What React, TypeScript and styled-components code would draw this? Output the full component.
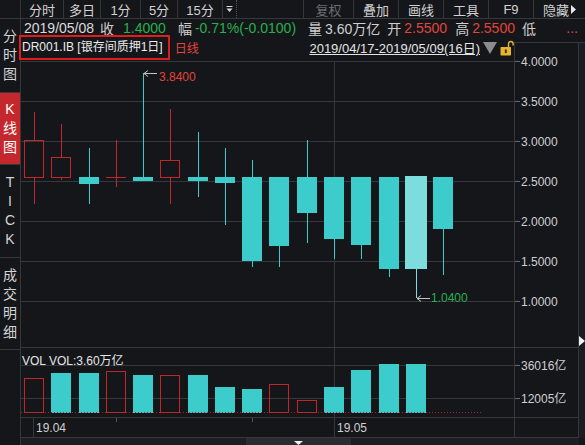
import React from "react";
import styled, { createGlobalStyle } from "styled-components";

const FONT = `"Liberation Sans", "Noto Sans CJK SC", sans-serif`;
const BG = "#15161a";
const LINE = "#36373d";
const TEXT = "#cfcfcf";
const RED_TXT = "#e2443c";
const RED = "#c0262a";
const GREEN = "#28b04c";
const CYAN = "#3ccccc";
const CYAN_SEL = "#7ddcdc";

const GlobalStyle = createGlobalStyle`
  html, body { margin: 0; padding: 0; background: ${BG}; }
  body { font-family: ${FONT}; color: ${TEXT}; }
  #root { width: 585px; height: 445px; overflow: hidden; }
`;

const Frame = styled.div`
  display: flex;
  width: 585px;
  height: 445px;
  background: ${BG};
  overflow: hidden;
`;

/* ---------- sidebar ---------- */
const Sidebar = styled.div`
  width: 20px;
  flex-shrink: 0;
  border-right: 1px solid ${LINE};
  display: flex;
  flex-direction: column;
`;
const SideCorner = styled.div`
  height: 19px;
  box-sizing: border-box;
  border-bottom: 1px solid ${LINE};
`;
const SideTab = styled.div<{ $h: number; $active?: boolean }>`
  height: ${(p) => p.$h}px;
  box-sizing: border-box;
  border-bottom: 1px solid ${LINE};
  display: flex;
  flex-direction: column;
  align-items: center;
  justify-content: center;
  background: ${(p) => (p.$active ? "#c4282c" : "transparent")};
  color: ${(p) => (p.$active ? "#ffffff" : "#d4d4d4")};
  font-size: 14px;
  line-height: 19px;
`;
const SideChar = styled.span`
  display: block;
  height: 19px;
`;

/* ---------- main ---------- */
const Main = styled.div`
  flex: 1;
  display: flex;
  flex-direction: column;
  min-width: 0;
`;

const Toolbar = styled.div`
  height: 19px;
  box-sizing: border-box;
  border-bottom: 1px solid ${LINE};
  display: flex;
  justify-content: space-between;
`;
const TabGroup = styled.div`
  display: flex;
`;
const Tab = styled.div<{ $w: number; $right?: boolean; $dim?: boolean }>`
  width: ${(p) => p.$w}px;
  height: 18px;
  box-sizing: border-box;
  ${(p) => (p.$right ? `border-left: 1px solid ${LINE};` : `border-right: 1px solid ${LINE};`)}
  display: flex;
  align-items: center;
  justify-content: center;
  gap: 2px;
  font-size: 13px;
  color: ${(p) => (p.$dim ? "#6c6c70" : "#d2d2d2")};
  white-space: nowrap;
`;
const MenuTab = styled.div`
  width: 14px;
  height: 18px;
  box-sizing: border-box;
  border-right: 1px dotted #55565c;
  display: flex;
  align-items: center;
  justify-content: center;
`;

const InfoRow = styled.div`
  height: 18px;
  display: flex;
  align-items: center;
  padding-left: 3px;
  font-size: 14px;
  white-space: nowrap;
`;
const InfoText = styled.span<{ $c?: string; $ml?: number }>`
  color: ${(p) => p.$c || TEXT};
  margin-left: ${(p) => p.$ml || 0}px;
`;
const More = styled.span`
  margin-left: auto;
  margin-right: 7px;
  color: ${RED_TXT};
  font-size: 14px;
`;

const Body = styled.div`
  height: 401px;
  display: flex;
`;
const PlotCol = styled.div`
  width: 493px;
  display: flex;
  flex-direction: column;
`;
const TitleRow = styled.div`
  height: 21px;
  display: flex;
  align-items: center;
`;
const TitleBox = styled.span`
  display: inline-block;
  box-sizing: border-box;
  height: 21px;
  line-height: 17px;
  padding: 2px 5px 2px 1px;
  outline: 2px solid #e11c1c;
  color: #ececec;
  font-size: 12px;
  white-space: nowrap;
`;
const Period = styled.span`
  margin-left: 7px;
  color: ${RED_TXT};
  font-size: 12px;
`;
const RangeText = styled.span`
  margin-left: auto;
  color: #e4e4e4;
  font-size: 13px;
  text-decoration: underline;
  text-underline-offset: 1px;
  white-space: nowrap;
`;
const IconBox = styled.span<{ $ml: number }>`
  display: flex;
  margin-left: ${(p) => p.$ml}px;
`;

const Chart = styled.svg`
  display: block;
  font-family: ${FONT};
  font-size: 12px;
`;

const VolPanel = styled.div`
  height: 70px;
  box-sizing: border-box;
  border-top: 1px solid ${LINE};
  position: relative;
`;
const VolLabel = styled.span`
  position: absolute;
  left: 1px;
  top: 3px;
  font-size: 12px;
  color: #e6e6e6;
  white-space: nowrap;
`;
const DateRow = styled.div`
  height: 21px;
  box-sizing: border-box;
  border-top: 1px solid ${LINE};
  border-bottom: 1px solid ${LINE};
`;

const AxisCol = styled.div`
  width: 65px;
  box-sizing: border-box;
  margin-top: 5px;
  border-left: 1px solid ${LINE};
  border-right: 1px solid ${LINE};
  display: flex;
  flex-direction: column;
`;
const AxisCell = styled.div<{ $h: number; $bottom?: boolean }>`
  height: ${(p) => p.$h}px;
  box-sizing: border-box;
  border-top: 1px solid ${LINE};
  ${(p) => (p.$bottom ? `border-bottom: 1px solid ${LINE};` : "")}
`;
const Strip = styled.div`
  width: 6px;
  margin-top: 5px;
  height: 396px;
  box-sizing: border-box;
  border-top: 1px solid ${LINE};
  background: #1b1c21;
  padding-top: 289px;
`;

const ScrollBar = styled.div`
  height: 7px;
  background: #1d1e23;
  display: flex;
  width: 558px;
`;
const Thumb = styled.div`
  margin-left: 225px;
  width: 105px;
  background: #2b2c32;
  display: flex;
  justify-content: center;
  align-items: flex-end;
`;

/* ---------- data ---------- */
type K = { o: number; c: number; h: number; l: number; t: "up" | "down" | "sel" };
const candles: K[] = [
  { o: 2.55, c: 3.01, h: 3.36, l: 2.21, t: "up" },
  { o: 2.55, c: 2.8, h: 3.21, l: 2.51, t: "up" },
  { o: 2.55, c: 2.46, h: 2.91, l: 2.21, t: "down" },
  { o: 2.55, c: 2.55, h: 3.01, l: 2.42, t: "up" },
  { o: 2.55, c: 2.5, h: 3.84, l: 2.5, t: "down" },
  { o: 2.55, c: 2.76, h: 3.4, l: 2.21, t: "up" },
  { o: 2.55, c: 2.5, h: 3.11, l: 2.3, t: "down" },
  { o: 2.55, c: 2.47, h: 2.91, l: 1.95, t: "down" },
  { o: 2.55, c: 1.5, h: 2.76, l: 1.42, t: "down" },
  { o: 2.55, c: 1.69, h: 2.55, l: 1.42, t: "down" },
  { o: 2.55, c: 2.1, h: 3.01, l: 1.73, t: "down" },
  { o: 2.55, c: 1.78, h: 2.55, l: 1.52, t: "down" },
  { o: 2.55, c: 1.7, h: 2.55, l: 1.52, t: "down" },
  { o: 2.55, c: 1.4, h: 2.55, l: 1.3, t: "down" },
  { o: 2.56, c: 1.4, h: 2.56, l: 1.04, t: "sel" },
  { o: 2.55, c: 1.9, h: 2.55, l: 1.33, t: "down" },
];
const vols: { top: number; up: boolean }[] = [
  { top: 30, up: true },
  { top: 25, up: false },
  { top: 25, up: false },
  { top: 23, up: true },
  { top: 27, up: false },
  { top: 27, up: true },
  { top: 27, up: false },
  { top: 39, up: false },
  { top: 41, up: false },
  { top: 36, up: true },
  { top: 52, up: true },
  { top: 39, up: false },
  { top: 22, up: false },
  { top: 16, up: false },
  { top: 16, up: false },
];
const prices = [4, 3.5, 3, 2.5, 2, 1.5, 1];

const pageY = (p: number) => 60.5 + (4 - p) * 80.2;
const py = (p: number) => pageY(p) - 58; // price plot local
const ay = (p: number) => pageY(p) - 43; // axis local
const cx = (i: number) => Math.round(13 + i * 27.27);
const VX = 313.5; // month divider

function Candle({ d, i }: { d: K; i: number }) {
  const x = cx(i);
  const wx = x + 0.5;
  const yTop = Math.round(py(Math.max(d.o, d.c)));
  const yBot = Math.round(py(Math.min(d.o, d.c)));
  const yH = Math.round(py(d.h));
  const yL = Math.round(py(d.l));
  if (d.t === "up") {
    if (yBot - yTop < 2) {
      return (
        <g>
          <line x1={wx} x2={wx} y1={yH} y2={yL} stroke={RED} />
          <line x1={x - 10} x2={x + 10} y1={yTop + 0.5} y2={yTop + 0.5} stroke={RED} />
        </g>
      );
    }
    return (
      <g>
        <line x1={wx} x2={wx} y1={yH} y2={yTop} stroke={RED} />
        <line x1={wx} x2={wx} y1={yBot} y2={yL} stroke={RED} />
        <rect x={x - 9.5} y={yTop + 0.5} width={19} height={yBot - yTop} fill="none" stroke={RED} />
      </g>
    );
  }
  const half = d.t === "sel" ? 11 : 10;
  const color = d.t === "sel" ? CYAN_SEL : CYAN;
  const h = Math.max(yBot - yTop, 4);
  return (
    <g>
      <line x1={wx} x2={wx} y1={yH} y2={yL} stroke={color} />
      <rect x={x - half} y={yTop} width={half * 2} height={h} fill={color} />
    </g>
  );
}

function Arrow({ x, y, len }: { x: number; y: number; len: number }) {
  return (
    <g stroke="#c4c4c4" fill="none" strokeWidth={1}>
      <polyline points={`${x + 5},${y - 3} ${x + 1},${y} ${x + 5},${y + 3}`} />
      <line x1={x + 1} x2={x + len} y1={y} y2={y} />
    </g>
  );
}

function PricePlot() {
  const hi = py(3.84);
  const lo = py(1.04);
  return (
    <Chart width={493} height={289}>
      {prices.map((p) => {
        const y = Math.round(py(p)) + 0.5;
        return <line key={p} x1={0} x2={493} y1={y} y2={y} stroke={LINE} />;
      })}
      <line x1={VX} x2={VX} y1={Math.round(py(4))} y2={289} stroke={LINE} />
      {candles.map((d, i) => (
        <Candle key={i} d={d} i={i} />
      ))}
      <Arrow x={cx(4)} y={Math.round(hi) + 0.5} len={14} />
      <text x={cx(4) + 16} y={hi + 8} fill={RED_TXT}>
        3.8400
      </text>
      <Arrow x={cx(14)} y={Math.round(lo) + 0.5} len={14} />
      <text x={cx(14) + 15} y={lo + 4.5} fill={GREEN}>
        1.0400
      </text>
    </Chart>
  );
}

function VolPlot() {
  return (
    <Chart width={493} height={69}>
      <line x1={0} x2={493} y1={17.5} y2={17.5} stroke={LINE} />
      <line x1={0} x2={493} y1={50.5} y2={50.5} stroke={LINE} />
      <line x1={VX} x2={VX} y1={0} y2={69} stroke={LINE} />
      {vols.map((v, i) => {
        const x = cx(i);
        return v.up ? (
          <rect key={i} x={x - 9.5} y={v.top + 0.5} width={19} height={64 - v.top} fill="none" stroke={RED} />
        ) : (
          <rect key={i} x={x - 10} y={v.top} width={20} height={65 - v.top} fill={CYAN} />
        );
      })}
      <line x1={0} x2={462} y1={64.5} y2={64.5} stroke="#a8262a" strokeDasharray="1 2" />
    </Chart>
  );
}

function DatePlot() {
  return (
    <Chart width={493} height={19}>
      <line x1={12.5} x2={12.5} y1={0} y2={19} stroke={LINE} />
      <line x1={95.5} x2={95.5} y1={0} y2={4} stroke="#55565c" />
      <line x1={231.5} x2={231.5} y1={0} y2={4} stroke="#55565c" />
      <line x1={VX} x2={VX} y1={0} y2={19} stroke={LINE} />
      <text x={15} y={14} fill={TEXT}>
        19.04
      </text>
      <text x={316} y={14} fill={TEXT}>
        19.05
      </text>
    </Chart>
  );
}

function PriceAxis() {
  return (
    <Chart width={63} height={304}>
      {prices.map((p) => {
        const y = Math.round(ay(p)) + 0.5;
        return (
          <g key={p}>
            <line x1={0} x2={5} y1={y} y2={y} stroke="#6a6b70" />
            <text x={6} y={y + 4.5} fill={TEXT}>
              {p.toFixed(4)}
            </text>
          </g>
        );
      })}
    </Chart>
  );
}

function VolAxis() {
  return (
    <Chart width={63} height={69}>
      {[
        { y: 17.5, t: "36016亿" },
        { y: 50.5, t: "12005亿" },
      ].map((r) => (
        <g key={r.t}>
          <line x1={0} x2={5} y1={r.y} y2={r.y} stroke="#6a6b70" />
          <text x={6} y={r.y + 4.5} fill={TEXT}>
            {r.t}
          </text>
        </g>
      ))}
    </Chart>
  );
}

const leftTabs = [
  { t: "分时", w: 43 },
  { t: "多日", w: 37 },
  { t: "1分", w: 40 },
  { t: "5分", w: 37 },
  { t: "15分", w: 45 },
];
const rightTabs = [
  { t: "复权", w: 50, dim: true },
  { t: "叠加", w: 45 },
  { t: "画线", w: 45 },
  { t: "工具", w: 45 },
  { t: "F9", w: 45 },
];

const sideTabs = [
  { t: "分时图", h: 74 },
  { t: "K线图", h: 72, active: true },
  { t: "TICK", h: 93 },
  { t: "成交明细", h: 92 },
];

export default function App() {
  return (
    <>
      <GlobalStyle />
      <Frame>
        <Sidebar>
          <SideCorner />
          {sideTabs.map((s) => (
            <SideTab key={s.t} $h={s.h} $active={s.active}>
              {s.t.split("").map((c, i) => (
                <SideChar key={i}>{c}</SideChar>
              ))}
            </SideTab>
          ))}
        </Sidebar>
        <Main>
          <Toolbar>
            <TabGroup>
              {leftTabs.map((t) => (
                <Tab key={t.t} $w={t.w}>
                  {t.t}
                </Tab>
              ))}
              <MenuTab>
                <svg width="7" height="8" viewBox="0 0 7 8">
                  <line x1="0.5" x2="6.5" y1="1.5" y2="1.5" stroke="#d8d8d8" />
                  <polygon points="0.5,3.5 6.5,3.5 3.5,7" fill="#d8d8d8" />
                </svg>
              </MenuTab>
            </TabGroup>
            <TabGroup>
              {rightTabs.map((t) => (
                <Tab key={t.t} $w={t.w} $right $dim={t.dim}>
                  {t.t}
                </Tab>
              ))}
              <Tab $w={52} $right>
                隐藏
                <svg width="5" height="9" viewBox="0 0 5 9">
                  <polygon points="0,0 5,4.5 0,9" fill="#e8e8e8" />
                </svg>
              </Tab>
            </TabGroup>
          </Toolbar>

          <InfoRow>
            <InfoText $c="#dadada">2019/05/08</InfoText>
            <InfoText $ml={6}>收</InfoText>
            <InfoText $ml={9} $c={GREEN}>1.4000</InfoText>
            <InfoText $ml={12}>幅</InfoText>
            <InfoText $ml={3} $c={GREEN}>-0.71%(-0.0100)</InfoText>
            <InfoText $ml={12}>量</InfoText>
            <InfoText $ml={3}>3.60万亿</InfoText>
            <InfoText $ml={7}>开</InfoText>
            <InfoText $ml={3} $c={RED_TXT}>2.5500</InfoText>
            <InfoText $ml={8}>高</InfoText>
            <InfoText $ml={3} $c={RED_TXT}>2.5500</InfoText>
            <InfoText $ml={7}>低</InfoText>
            <More>...</More>
          </InfoRow>

          <Body>
            <PlotCol>
              <TitleRow>
                <TitleBox>DR001.IB [银存间质押1日]</TitleBox>
                <Period>日线</Period>
                <RangeText>2019/04/17-2019/05/09(16日)</RangeText>
                <IconBox $ml={3}>
                  <svg width="14" height="12" viewBox="0 0 14 12">
                    <polygon points="0,0 14,0 7,12" fill="#8d8d90" />
                  </svg>
                </IconBox>
                <IconBox $ml={2}>
                  <svg width="15" height="16" viewBox="0 0 15 16">
                    <path d="M9.5 7 V3.8 A2.3 2.3 0 0 1 14.1 3.8 V5.5" stroke="#e6b52f" strokeWidth="1.4" fill="none" />
                    <rect x="1.5" y="7" width="10.5" height="8.5" rx="0.8" fill="#e6b52f" />
                    <rect x="5.8" y="9.5" width="2" height="3.5" fill="#4a3500" />
                  </svg>
                </IconBox>
              </TitleRow>
              <PricePlot />
              <VolPanel>
                <VolPlot />
                <VolLabel>VOL VOL:3.60万亿</VolLabel>
              </VolPanel>
              <DateRow>
                <DatePlot />
              </DateRow>
            </PlotCol>
            <AxisCol>
              <AxisCell $h={305}>
                <PriceAxis />
              </AxisCell>
              <AxisCell $h={70}>
                <VolAxis />
              </AxisCell>
              <AxisCell $h={21} $bottom />
            </AxisCol>
            <Strip>
              <svg width="6" height="10" viewBox="0 0 6 10">
                <polygon points="0,0 6,5 0,10" fill="#f0f0f0" />
              </svg>
            </Strip>
          </Body>

          <ScrollBar>
            <Thumb>
              <svg width="9" height="4" viewBox="0 0 9 4">
                <polygon points="0,0 9,0 4.5,4" fill="#f2f2f2" />
              </svg>
            </Thumb>
          </ScrollBar>
        </Main>
      </Frame>
    </>
  );
}
